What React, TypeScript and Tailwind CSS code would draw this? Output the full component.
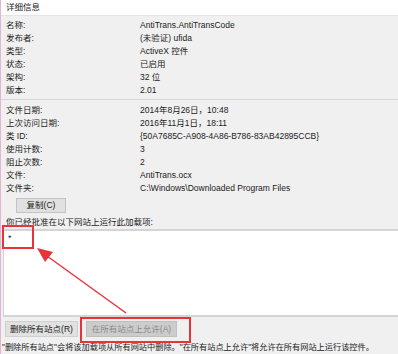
import React from "react";

const font = { fontFamily: '"Liberation Sans", "Noto Sans CJK SC", sans-serif' };

const general: [string, string][] = [
  ["名称:", "AntiTrans.AntiTransCode"],
  ["发布者:", "(未验证) ufida"],
  ["类型:", "ActiveX 控件"],
  ["状态:", "已启用"],
  ["架构:", "32 位"],
  ["版本:", "2.01"],
];

const fileInfo: [string, string][] = [
  ["文件日期:", "2014年8月26日，10:48"],
  ["上次访问日期:", "2016年11月1日，18:11"],
  ["类 ID:", "{50A7685C-A908-4A86-B786-83AB42895CCB}"],
  ["使用计数:", "3"],
  ["阻止次数:", "2"],
  ["文件:", "AntiTrans.ocx"],
  ["文件夹:", "C:\\Windows\\Downloaded Program Files"],
];

function Rows({ rows }: { rows: [string, string][] }) {
  return (
    <div className="pl-[5px]">
      {rows.map(([label, value]) => (
        <div key={label} className="grid h-[13px] grid-cols-[134px_1fr] items-center leading-[13px] whitespace-nowrap">
          <span>{label}</span>
          <span>{value}</span>
        </div>
      ))}
    </div>
  );
}

export default function App() {
  return (
    <div
      style={font}
      className="relative h-[354px] w-[398px] overflow-hidden border-l border-[#e2b6d3] bg-[#f0f0f0] text-[8.5px] text-[#1b1b1b]"
    >
      <div className="flex h-[16px] items-center border-b border-[#e4e4e4] bg-white pl-[5px]">详细信息</div>

      <div className="pt-[3px]">
        <Rows rows={general} />
      </div>
      <div className="mt-[2px] h-px bg-[#d6d6d6]" />

      <div className="pt-[4px]">
        <Rows rows={fileInfo} />
      </div>

      <button className="ml-[15px] mt-[3px] flex h-[15px] w-[50px] items-center justify-center border border-[#c4c4c4] bg-[#e1e1e1]">
        复制(C)
      </button>

      <div className="mt-[3px] h-[13px] pl-[5px] leading-[13px] whitespace-nowrap">你已经批准在以下网站上运行此加载项:</div>

      <div className="ml-[2px] h-[88px] w-[404px] border-y-2 border-l border-[#d5d5d5] bg-white">
        <div className="pl-[4px] pt-[1px] text-[9px] leading-[12px]">*</div>
      </div>

      <div className="mt-[4px] flex h-[16px] gap-[8px] pl-[4px]">
        <button className="flex w-[73px] items-center justify-center border border-[#d0d0d0] bg-[#e1e1e1] whitespace-nowrap">
          删除所有站点(R)
        </button>
        <button disabled className="flex w-[91px] items-center justify-center border border-[#bfbfbf] bg-[#cccccc] text-[#8a8a8a] whitespace-nowrap">
          在所有站点上允许(A)
        </button>
      </div>

      <div className="mt-[4px] h-[13px] pl-[1px] text-[8.2px] leading-[13px] whitespace-nowrap">
        "删除所有站点"会将该加载项从所有网站中删除。"在所有站点上允许"将允许在所有网站上运行该控件。
      </div>

      <svg className="pointer-events-none absolute left-0 top-0" width="398" height="354" viewBox="0 0 398 354">
        <rect x="2" y="226" width="30" height="22" fill="none" stroke="#e8333b" strokeWidth="2" />
        <rect x="80" y="318" width="109" height="24" fill="none" stroke="#e8333b" strokeWidth="2" />
        <line x1="125" y1="313" x2="46" y2="256" stroke="#e8333b" strokeWidth="1.5" />
        <polygon points="36,248 52,252 44,262" fill="#e8333b" />
      </svg>
    </div>
  );
}
